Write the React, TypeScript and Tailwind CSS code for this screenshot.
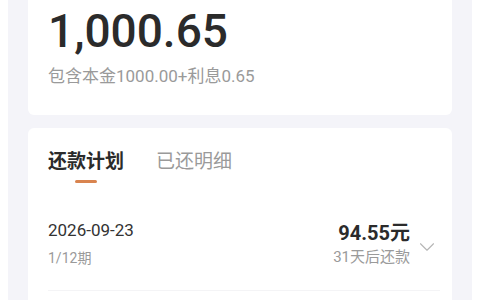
import { ChevronDown } from 'lucide-react';

const font = { fontFamily: 'Roboto, "Noto Sans CJK SC", sans-serif' };

export default function App() {
  return (
    <div className="w-[480px] h-[300px] overflow-hidden bg-white px-2" style={font}>
      <div className="h-full bg-[#f4f4f9] px-5">
        {/* summary card */}
        <div className="bg-white rounded-b-md pl-5 pt-2 h-[115px]">
          <div className="text-[46px] leading-[46px] font-medium text-[#2b2b2b]">1,000.65</div>
          <div className="mt-[10px] text-[17px] leading-6 text-[#9a9a9a]">包含本金1000.00+利息0.65</div>
        </div>

        {/* plan card */}
        <div className="mt-[13px] bg-white rounded-t-md pl-5 pr-3 h-[200px]">
          <div className="flex gap-8 pt-[20px]">
            <div className="flex flex-col items-center">
              <span className="text-[19px] leading-7 font-bold text-[#2b2b2b]">还款计划</span>
              <span className="mt-[4px] w-[22px] h-[3px] rounded-full bg-[#d9844f]" />
            </div>
            <span className="text-[19px] leading-7 text-[#9a9a9a]">已还明细</span>
          </div>

          <div className="flex items-center mt-[37px] pb-[22px] border-b border-[#f4f4f6]">
            <div className="flex-1">
              <div className="text-[17px] leading-5 font-normal text-[#333]">2026-09-23</div>
              <div className="mt-2 text-[14px] leading-5 text-[#9a9a9a]">1/12期</div>
            </div>
            <div className="flex flex-col items-end">
              <div className="text-[20px] leading-6 font-bold text-[#2b2b2b]">94.55元</div>
              <div className="mt-[2px] text-[15px] leading-5 text-[#9a9a9a]">31天后还款</div>
            </div>
            <ChevronDown className="ml-1 mt-[6px] w-[26px] h-[26px] text-[#b5b5b5]" strokeWidth={1} />
          </div>
        </div>
      </div>
    </div>
  );
}
